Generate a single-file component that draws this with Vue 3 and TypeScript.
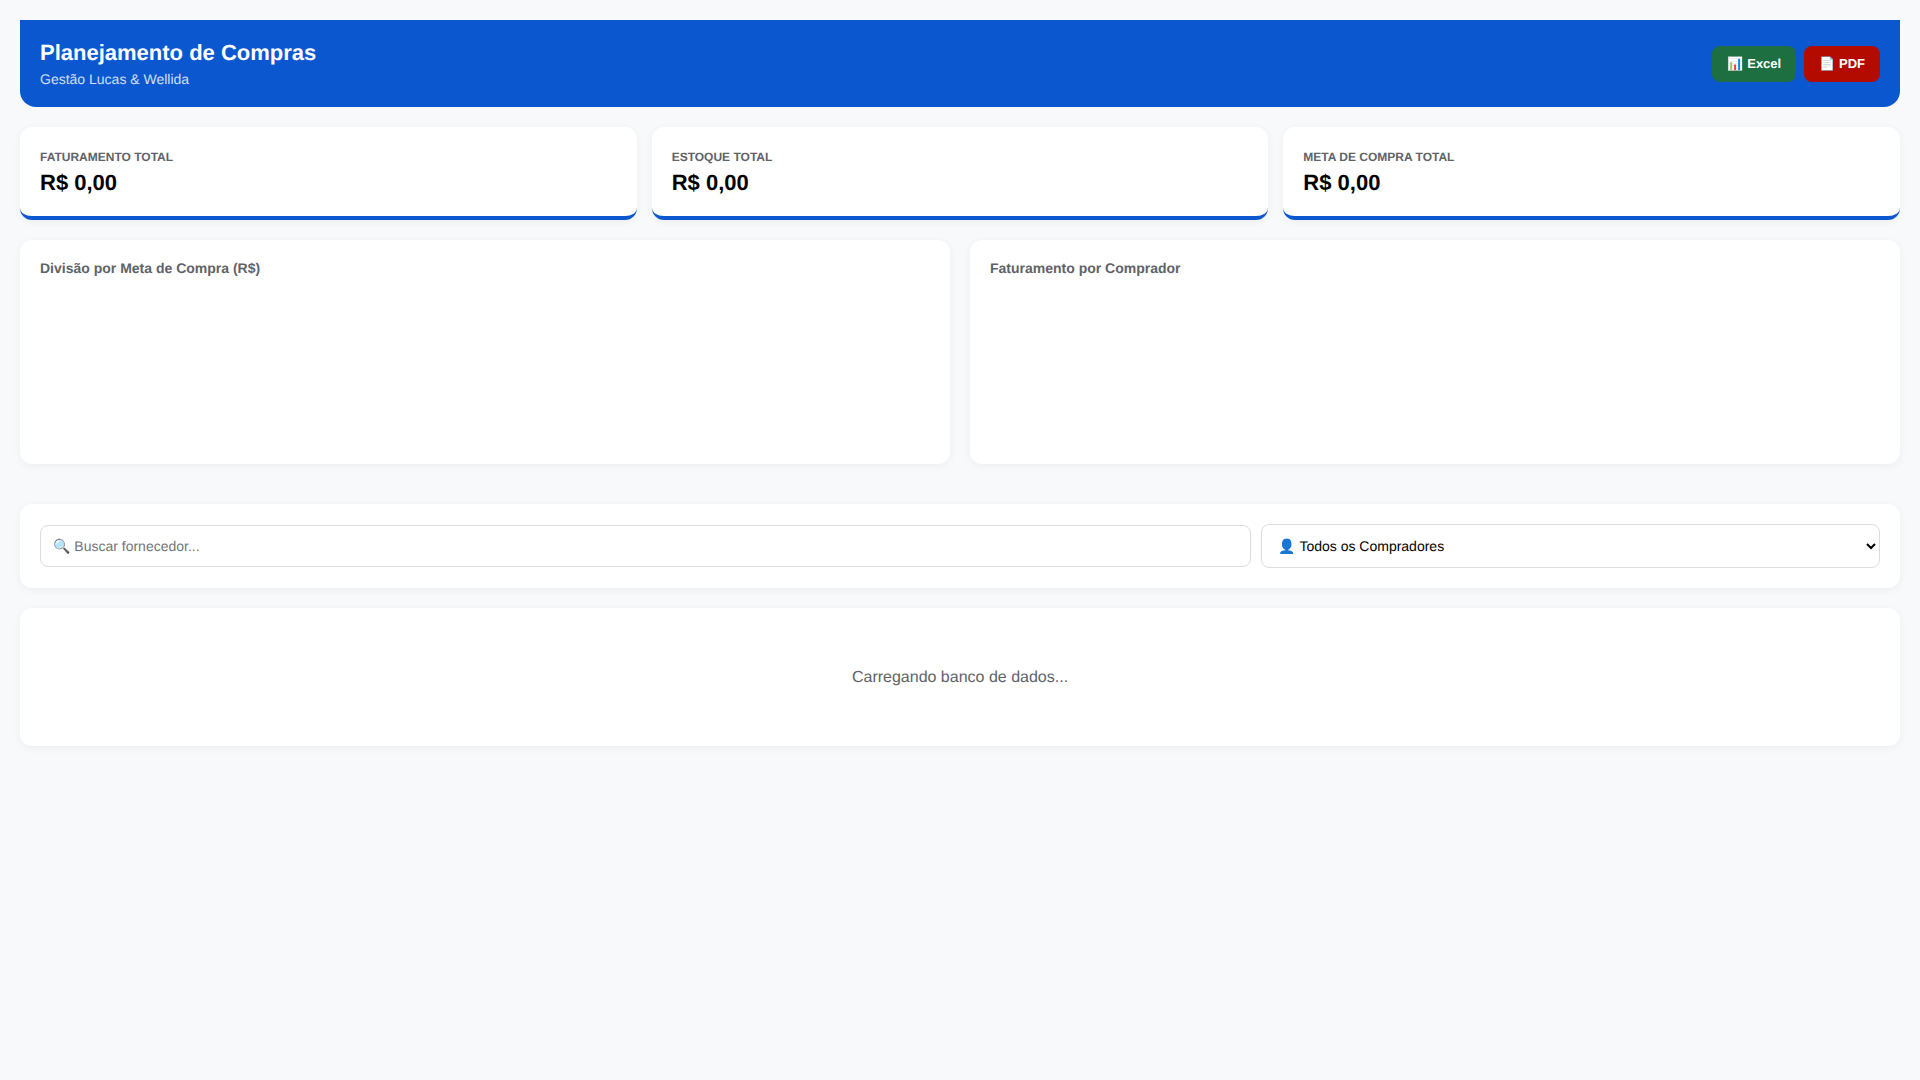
<script setup lang="ts">
const kpis = [
  { label: 'Faturamento Total', value: 'R$ 0,00' },
  { label: 'Estoque Total', value: 'R$ 0,00' },
  { label: 'Meta de Compra Total', value: 'R$ 0,00' },
]
const charts = ['Divisão por Meta de Compra (R$)', 'Faturamento por Comprador']
</script>

<template>
  <main class="page">
    <header class="header">
      <div>
        <h1 class="title">Planejamento de Compras</h1>
        <p class="subtitle">Gestão Lucas &amp; Wellida</p>
      </div>
      <div class="actions">
        <button class="btn excel" type="button">📊 Excel</button>
        <button class="btn pdf" type="button">📄 PDF</button>
      </div>
    </header>

    <section class="kpis">
      <article v-for="k in kpis" :key="k.label" class="card kpi">
        <div class="kpi-label">{{ k.label }}</div>
        <div class="kpi-value">{{ k.value }}</div>
      </article>
    </section>

    <section class="charts">
      <article v-for="c in charts" :key="c" class="card chart">
        <h2 class="chart-title">{{ c }}</h2>
        <div class="chart-body"></div>
      </article>
    </section>

    <section class="card filters">
      <input class="search" type="text" placeholder="🔍 Buscar fornecedor..." />
      <select class="buyer">
        <option>👤 Todos os Compradores</option>
      </select>
    </section>

    <section class="card loading">Carregando banco de dados...</section>
  </main>
</template>

<style>
html, body { background: #f8f9fa; }
</style>

<style scoped>
.page {
  min-height: 1080px;
  box-sizing: border-box;
  padding: 20px;
  background: #f8f9fa;
  font-family: "Liberation Sans", Arial, sans-serif;
  text-rendering: geometricPrecision;
}
.header {
  display: flex;
  justify-content: space-between;
  align-items: center;
  padding: 20px;
  margin-bottom: 20px;
  background: #0b57d0;
  color: #fff;
  border-radius: 0 0 16px 16px;
}
.title { margin: 0; font-size: 22px; font-weight: 700; }
.subtitle { margin: 5px 0 0; font-size: 14px; opacity: 0.8; }
.actions { display: flex; gap: 8px; }
.btn {
  padding: 10px 15px;
  border: none;
  border-radius: 8px;
  color: #fff;
  font-size: 13px;
  font-weight: 700;
  text-rendering: geometricPrecision;
}
.excel { background: #1d6f42; }
.pdf { background: #b30b00; }
.card {
  background: #fff;
  border-radius: 12px;
  box-shadow: 0 2px 8px rgba(0, 0, 0, 0.05);
}
.kpis {
  display: grid;
  grid-template-columns: repeat(3, 1fr);
  gap: 15px;
  margin-bottom: 20px;
}
.kpi { padding: 23px 20px 20px; border-bottom: 4px solid #0b57d0; }
.kpi-label {
  font-size: 12px;
  font-weight: 700;
  color: #5f6368;
  text-transform: uppercase;
}
.kpi-value { margin-top: 6px; font-size: 22px; font-weight: 700; color: #000; }
.charts {
  display: grid;
  grid-template-columns: 1fr 1fr;
  gap: 20px;
  margin-bottom: 40px;
}
.chart { padding: 20px; }
.chart-title { margin: 0 0 15px; font-size: 14px; font-weight: 700; color: #5f6368; }
.chart-body { height: 153px; }
.filters {
  display: flex;
  align-items: center;
  gap: 10px;
  padding: 20px;
  margin-bottom: 20px;
}
.search, .buyer {
  padding: 12px;
  border: 1px solid #ddd;
  border-radius: 8px;
  background: #fff;
  font-size: 14px;
  min-width: 0;
  text-rendering: geometricPrecision;
}
.search { flex: 2; }
.buyer { flex: 1; color: #000; }
.loading {
  padding: 61px 20px 59px;
  text-align: center;
  font-size: 16px;
  color: #5f6368;
}
</style>
